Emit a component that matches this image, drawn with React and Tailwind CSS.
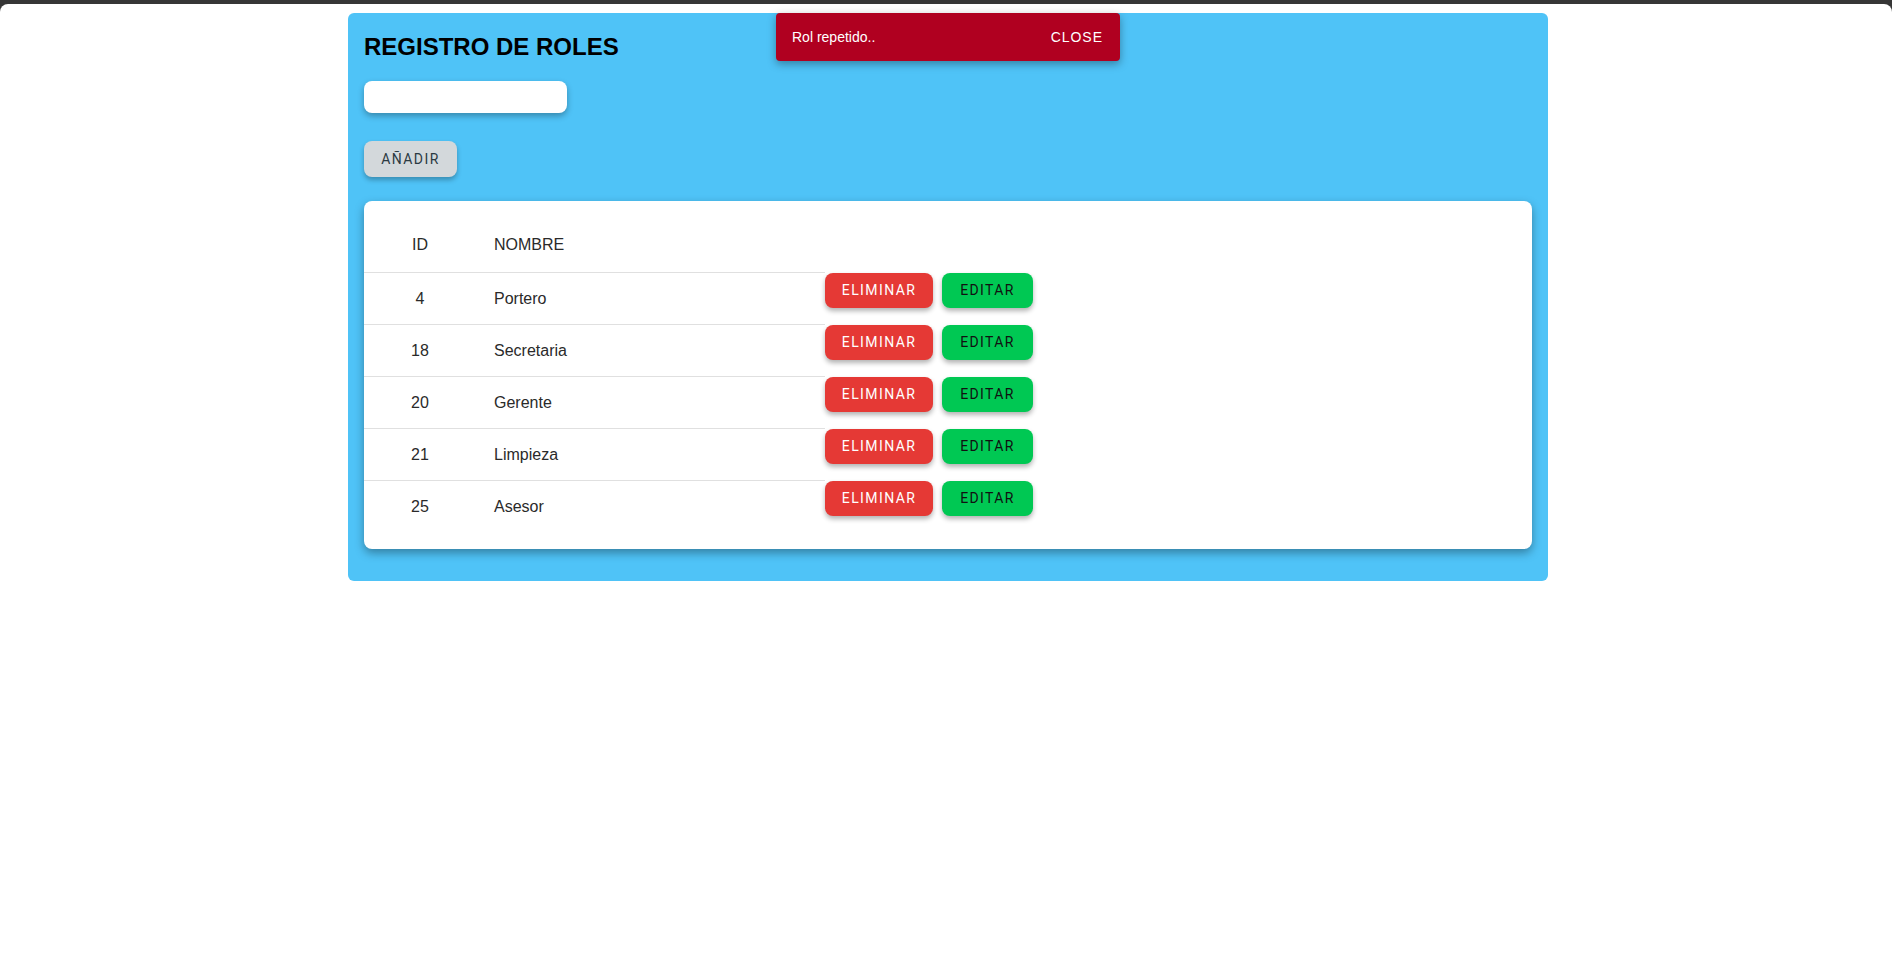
import React, { useState } from "react";

const roles = [
  { id: 4, nombre: "Portero" },
  { id: 18, nombre: "Secretaria" },
  { id: 20, nombre: "Gerente" },
  { id: 21, nombre: "Limpieza" },
  { id: 25, nombre: "Asesor" },
];

function App() {
  const [nombre, setNombre] = useState("");
  const [open, setOpen] = useState(true);

  return (
    <div className="min-h-screen bg-[#363636] pt-[4px] relative">
      <div className="bg-white rounded-t-lg min-h-[966px]">
        {/* Panel */}
        <div className="flex justify-center pl-[4px] pt-[9px]">
          <div className="w-[1200px] bg-[#4fc3f7] rounded-md px-4 pt-4 pb-8">
            <h1
              className="mt-1 text-[24px] leading-[28px] font-bold text-black"
              style={{ fontFamily: '"Liberation Sans", Arial, sans-serif' }}
            >
              REGISTRO DE ROLES
            </h1>

            <input
              type="text"
              value={nombre}
              onChange={(e) => setNombre(e.target.value)}
              className="mt-5 block w-[203px] h-8 bg-white rounded-lg px-3 text-sm outline-none shadow-[0_3px_6px_rgba(0,0,0,0.3)]"
            />

            <button
              className="mt-7 block w-[93px] h-9 rounded-lg bg-[#d3d8db] text-[#2b3a42] text-[14px] font-normal tracking-[0.1em] shadow-[0_3px_5px_rgba(0,0,0,0.28)]"
              style={{ fontFamily: "Roboto, sans-serif" }}
            >
              AÑADIR
            </button>

            {/* Tabla */}
            <div
              className="mt-6 bg-white rounded-lg py-4 shadow-[0_4px_10px_rgba(0,0,0,0.35)] text-[16px] text-[#2a2a2a]"
              style={{ fontFamily: '"Liberation Sans", Arial, sans-serif' }}
            >
              <div className="flex items-center w-[461px] h-[56px] border-b border-[#e0e0e0]">
                <div className="w-[112px] text-center">ID</div>
                <div className="pl-[18px]">NOMBRE</div>
              </div>

              {roles.map((rol, i) => (
                <div key={rol.id} className="flex items-start">
                  <div
                    className={
                      i < roles.length - 1
                        ? "flex items-center w-[461px] h-[52px] border-b border-[#e0e0e0]"
                        : "flex items-center w-[461px] h-[52px]"
                    }
                  >
                    <div className="w-[112px] text-center">{rol.id}</div>
                    <div className="pl-[18px]">{rol.nombre}</div>
                  </div>
                  <div
                    className="flex gap-[9px]"
                    style={{ fontFamily: "Roboto, sans-serif" }}
                  >
                    <button className="w-[108px] h-[35px] rounded-lg bg-[#e53935] text-white text-[14px] font-normal tracking-[0.1em] shadow-[0_3px_5px_rgba(0,0,0,0.3)]">
                      ELIMINAR
                    </button>
                    <button className="w-[91px] h-[35px] rounded-lg bg-[#00c853] text-[#111] text-[14px] font-normal tracking-[0.1em] shadow-[0_3px_5px_rgba(0,0,0,0.3)]">
                      EDITAR
                    </button>
                  </div>
                </div>
              ))}
            </div>
          </div>
        </div>
      </div>

      {/* Snackbar */}
      {open && (
        <div
          className="absolute top-[13px] left-[776px] w-[344px] h-12 bg-[#b00020] rounded flex items-center justify-between pl-4 pr-[17px] text-white text-[14px] shadow-[0_3px_8px_rgba(0,0,0,0.35)]"
          style={{ fontFamily: '"Liberation Sans", Arial, sans-serif' }}
        >
          <span>Rol repetido..</span>
          <button
            onClick={() => setOpen(false)}
            className="tracking-[0.07em] text-white"
          >
            CLOSE
          </button>
        </div>
      )}
    </div>
  );
}

export default App;
